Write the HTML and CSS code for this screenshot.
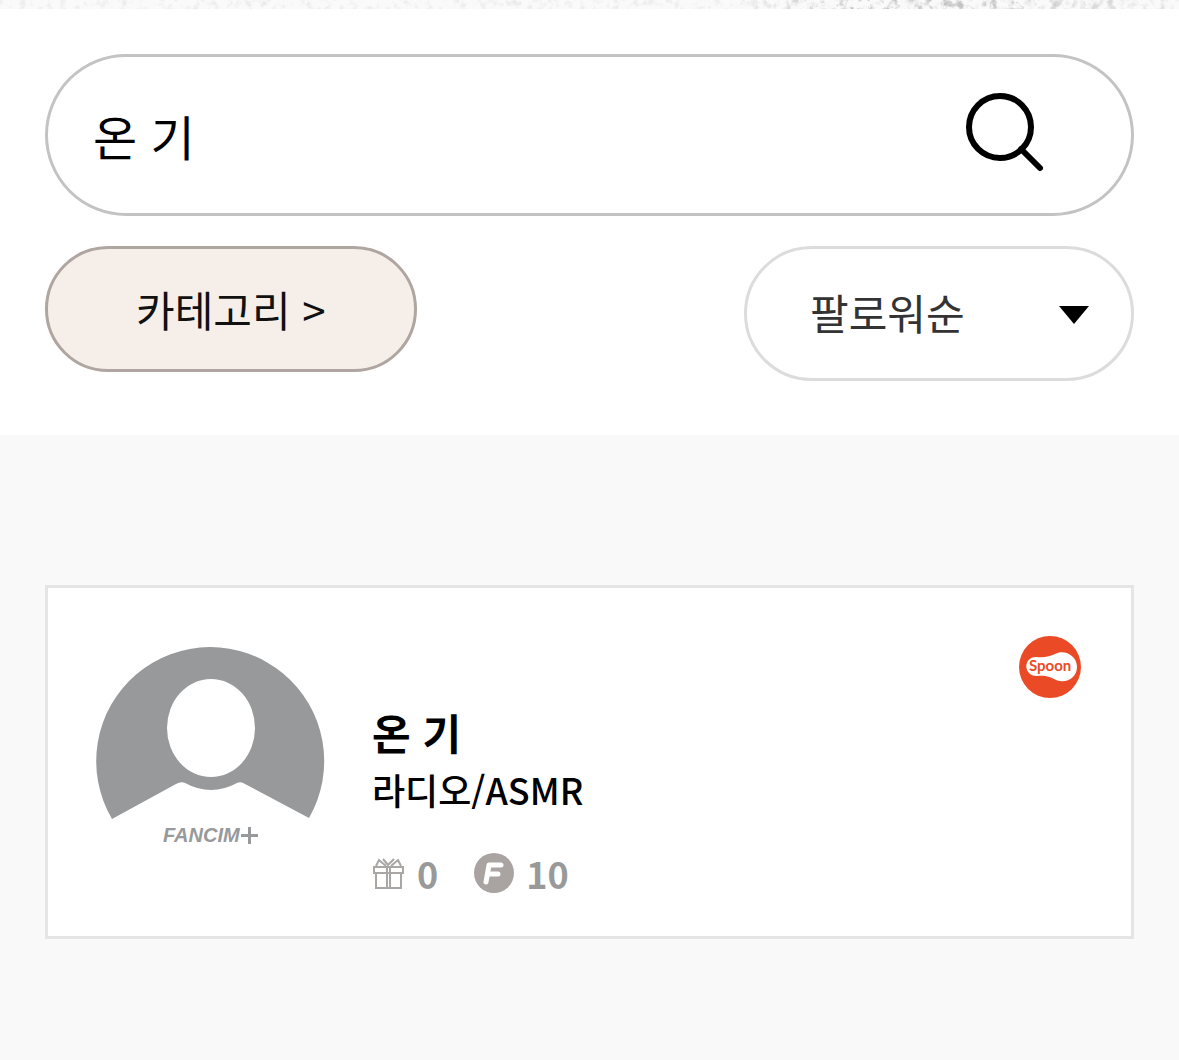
FILE: index.html
```
<!DOCTYPE html>
<html lang="ko">
<head>
  <meta charset="UTF-8">
  <meta name="viewport" content="width=device-width, initial-scale=1.0">
  <title>온 기 - FANCIM+</title>
  <link rel="stylesheet" href="styles.css">
</head>
<body>
  <header class="top">
    <svg class="texture" aria-hidden="true">
      <defs>
        <filter id="grain" x="0" y="0" width="100%" height="100%">
          <feTurbulence type="fractalNoise" baseFrequency="0.15" numOctaves="4" seed="4"/>
          <feColorMatrix values="0 0 0 0 0.4  0 0 0 0 0.4  0 0 0 0 0.4  1.5 0 0 0 -0.75"/>
        </filter>
        <filter id="specks" x="0" y="0" width="100%" height="100%">
          <feTurbulence type="fractalNoise" baseFrequency="0.12" numOctaves="5" seed="9"/>
          <feColorMatrix values="0 0 0 0 0.3  0 0 0 0 0.3  0 0 0 0 0.3  4 0 0 0 -2"/>
        </filter>
        <linearGradient id="fade">
          <stop offset="0.62" stop-color="#000"/>
          <stop offset="0.72" stop-color="#fff"/>
          <stop offset="0.88" stop-color="#bbb"/>
          <stop offset="1" stop-color="#333"/>
        </linearGradient>
        <mask id="dusty"><rect width="100%" height="100%" fill="url(#fade)"/></mask>
      </defs>
      <rect width="100%" height="100%" fill="#fafafa"/>
      <rect width="100%" height="100%" filter="url(#grain)" opacity="0.4"/>
      <g mask="url(#dusty)"><rect width="100%" height="100%" filter="url(#specks)" opacity="0.6"/></g>
    </svg>

    <form class="search-form">
      <div class="search">
        <input class="search-input" type="text" value="온 기" aria-label="검색">
        <button class="search-btn" type="submit" aria-label="검색하기">
          <svg viewBox="0 0 90 90" width="90" height="90" fill="none" stroke="#000" stroke-width="6">
            <circle cx="40" cy="37" r="31"/>
            <path d="M61 59L80 78" stroke-linecap="round"/>
          </svg>
        </button>
      </div>
      <div class="filters">
        <button class="category" type="button">카테고리 &gt;</button>
        <div class="sort">
          <select class="sort-select" aria-label="정렬">
            <option>팔로워순</option>
          </select>
          <svg class="sort-arrow" viewBox="0 0 30 18" width="30" height="18"><path d="M0 0H30L15 18Z"/></svg>
        </div>
      </div>
    </form>
  </header>

  <main class="results">
    <article class="card">
      <svg class="avatar" viewBox="0 0 228 228" width="228" height="228" role="img" aria-label="FANCIM+">
        <path fill="#97999b" d="M16 171A114 114 0 1 1 213 170L149 136Q145 133 141 135Q115 149 89 135Q85 133 80 136Z"/>
        <ellipse cx="115" cy="80" rx="44" ry="49" fill="#fff"/>
        <text class="avatar-name" x="67" y="194">FANCIM</text>
        <path fill="#97999b" d="M152 179h3v7h7v3h-7v7h-3v-7h-7v-3h7z"/>
      </svg>

      <div class="info">
        <h2 class="name">온 기</h2>
        <p class="genre">라디오/ASMR</p>
        <ul class="stats">
          <li class="stat">
            <svg viewBox="0 0 33 33" width="33" height="33" fill="none" stroke="#a9a6a4" stroke-width="2">
              <path d="M2 10H31V16H2ZM4 16V31H29V16M15 10V31M18 10V31M14 9L7 3L4 9M19 9L26 3L29 9M11 2L16 8L22 2"/>
            </svg>
            0
          </li>
          <li class="stat">
            <svg viewBox="0 0 40 40" width="40" height="40">
              <circle cx="20" cy="20" r="20" fill="#a9a4a1"/>
              <path d="M12 29L15 12H27M14 21H24" fill="none" stroke="#fff" stroke-width="5" stroke-linecap="round" stroke-linejoin="round"/>
            </svg>
            10
          </li>
        </ul>
      </div>

      <a class="platform" href="#" aria-label="Spoon">
        <svg viewBox="0 0 64 64" width="64" height="64">
          <circle cx="31" cy="31" r="31" fill="#ea4b26"/>
          <path fill="#fff" d="M17 21C26 22 31 20 36 18C46 13 58 20 58 31C58 42 47 48 37 44C31 41 27 39 18 40C4 40 4 21 17 21Z"/>
          <text class="platform-name" x="10" y="35">Spoon</text>
        </svg>
      </a>
    </article>
  </main>
</body>
</html>
```
FILE: styles.css
```
* {
  box-sizing: border-box;
}
body {
  margin: 0;
  min-height: 100vh;
  background: #f9f9f9;
  color: #000;
  font-family: "Noto Sans CJK KR", sans-serif;
}
button,
input,
select {
  font-family: inherit;
  color: inherit;
}
.top {
  background: #fff;
  padding-bottom: 54px;
}
.texture {
  display: block;
  width: 100%;
  height: 9px;
}
.search-form {
  padding: 45px 45px 0;
}
.search {
  display: flex;
  align-items: center;
  height: 162px;
  padding: 0 81px 0 45px;
  border: 3px solid #c3c3c3;
  border-radius: 81px;
}
.search-input {
  flex: 1;
  min-width: 0;
  padding: 0;
  border: 0;
  outline: 0;
  background: none;
  font-size: 48px;
}
.search-btn {
  padding: 0;
  border: 0;
  background: none;
  cursor: pointer;
}
.search-btn svg {
  display: block;
}
.filters {
  display: flex;
  justify-content: space-between;
  align-items: flex-start;
  margin-top: 30px;
}
.category {
  height: 126px;
  padding: 0 88px 2px;
  border: 3px solid #afa5a1;
  border-radius: 63px;
  background: #f6efe9;
  color: #111;
  font-size: 42px;
  cursor: pointer;
}
.sort {
  position: relative;
  width: 390px;
}
.sort-select {
  width: 100%;
  height: 135px;
  padding: 0 84px 4px 63px;
  border: 3px solid #dcdcdc;
  border-radius: 68px;
  background: #fff;
  color: #333;
  font-size: 42px;
  appearance: none;
}
.sort-arrow {
  position: absolute;
  top: 60px;
  right: 45px;
  pointer-events: none;
}
.results {
  padding: 150px 45px;
}
.card {
  display: flex;
  align-items: flex-start;
  padding: 48px 48px 39px;
  border: 3px solid #e5e5e5;
  background: #fff;
}
.avatar {
  flex: none;
  margin-top: 12px;
  overflow: visible;
}
.avatar-name {
  font: italic bold 20px "Liberation Sans", sans-serif;
  fill: #97999b;
}
.info {
  flex: 1;
  padding: 66px 0 0 48px;
}
.name {
  margin: 0;
  font-size: 42px;
  line-height: 60px;
}
.genre {
  margin: 0;
  font-size: 36px;
  font-weight: 500;
  line-height: 54px;
}
.stats {
  display: flex;
  gap: 36px;
  margin: 33px 0 0;
  padding: 0;
  list-style: none;
}
.stat {
  display: flex;
  align-items: center;
  gap: 12px;
  color: #999;
  font-size: 36px;
  font-weight: bold;
  line-height: 48px;
}
.platform svg {
  display: block;
}
.platform-name {
  font: bold 15px Lato, sans-serif;
  fill: #ea4b26;
}
```
